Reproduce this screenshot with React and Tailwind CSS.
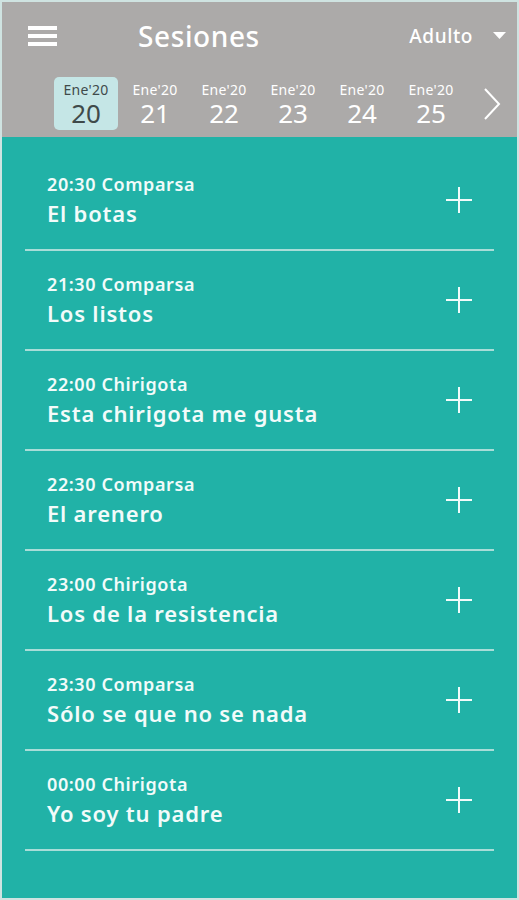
import { useState } from "react";

const days = ["20", "21", "22", "23", "24", "25"];

const sessions = [
    { time: "20:30 Comparsa", title: "El botas" },
    { time: "21:30 Comparsa", title: "Los listos" },
    { time: "22:00 Chirigota", title: "Esta chirigota me gusta" },
    { time: "22:30 Comparsa", title: "El arenero" },
    { time: "23:00 Chirigota", title: "Los de la resistencia" },
    { time: "23:30 Comparsa", title: "Sólo se que no se nada" },
    { time: "00:00 Chirigota", title: "Yo soy tu padre" },
];

function PlusIcon() {
    return (
        <svg width="28" height="28" viewBox="0 0 28 28" fill="none">
            <path d="M14 1v26M1 14h26" stroke="#f2fbfa" strokeWidth="2" />
        </svg>
    );
}

function App() {
    const [selected, setSelected] = useState("20");

    return (
        <div
            className="w-[519px] h-[900px] bg-[#21b2a7] border-2 border-[#cfe3e1] overflow-hidden"
            style={{ fontFamily: "'Noto Sans', sans-serif" }}
        >
            <div className="bg-[#acaaa9] h-[135px] text-white">
                <div className="flex items-center h-[68px] pl-[26px] pr-[11px]">
                    <button className="flex flex-col gap-[4px] w-[29px]">
                        <span className="block h-[4px] bg-white" />
                        <span className="block h-[4px] bg-white" />
                        <span className="block h-[4px] bg-white" />
                    </button>
                    <h1 className="ml-[81px] text-[28px] leading-none font-medium tracking-[0.6px]">
                        Sesiones
                    </h1>
                    <div className="ml-auto flex items-center gap-[20px]">
                        <span className="text-[19px] font-medium tracking-[0.6px]">Adulto</span>
                        <svg width="13" height="8" viewBox="0 0 13 8">
                            <path d="M0 0h13L6.5 7z" fill="#fff" />
                        </svg>
                    </div>
                </div>
                <div className="flex items-center pl-[52px] pr-[15px] mt-[7px]">
                    <div className="flex gap-[5px]">
                        {days.map((d) => (
                            <button
                                key={d}
                                onClick={() => setSelected(d)}
                                className={`w-[64px] h-[53px] rounded-[5px] flex flex-col items-center justify-center ${
                                    selected === d
                                        ? "bg-[#c5e6e6] text-[#3f4a4a]"
                                        : "text-white"
                                }`}
                            >
                                <span className="text-[14px] leading-[18px] tracking-[0.3px]">Ene'20</span>
                                <span className="text-[26px] leading-[28px]">{d}</span>
                            </button>
                        ))}
                    </div>
                    <svg className="ml-auto" width="20" height="34" viewBox="0 0 20 34" fill="none">
                        <path d="M3 2l14 15L3 32" stroke="#fff" strokeWidth="2" />
                    </svg>
                </div>
            </div>

            <div className="px-[23px] pt-[14px]">
                {sessions.map((s) => (
                    <div
                        key={s.time}
                        className="h-[100px] border-b-2 border-[#a9ddd8] flex items-center justify-between pl-[22px] pr-[21px] text-[#f2fbfa]"
                    >
                        <div className="flex flex-col">
                            <span className="text-[18px] font-semibold leading-[22px] tracking-[0.6px]">{s.time}</span>
                            <span className="text-[22px] font-semibold leading-[28px] tracking-[0.8px] mt-[4px]">{s.title}</span>
                        </div>
                        <PlusIcon />
                    </div>
                ))}
            </div>
        </div>
    );
}

export default App;
